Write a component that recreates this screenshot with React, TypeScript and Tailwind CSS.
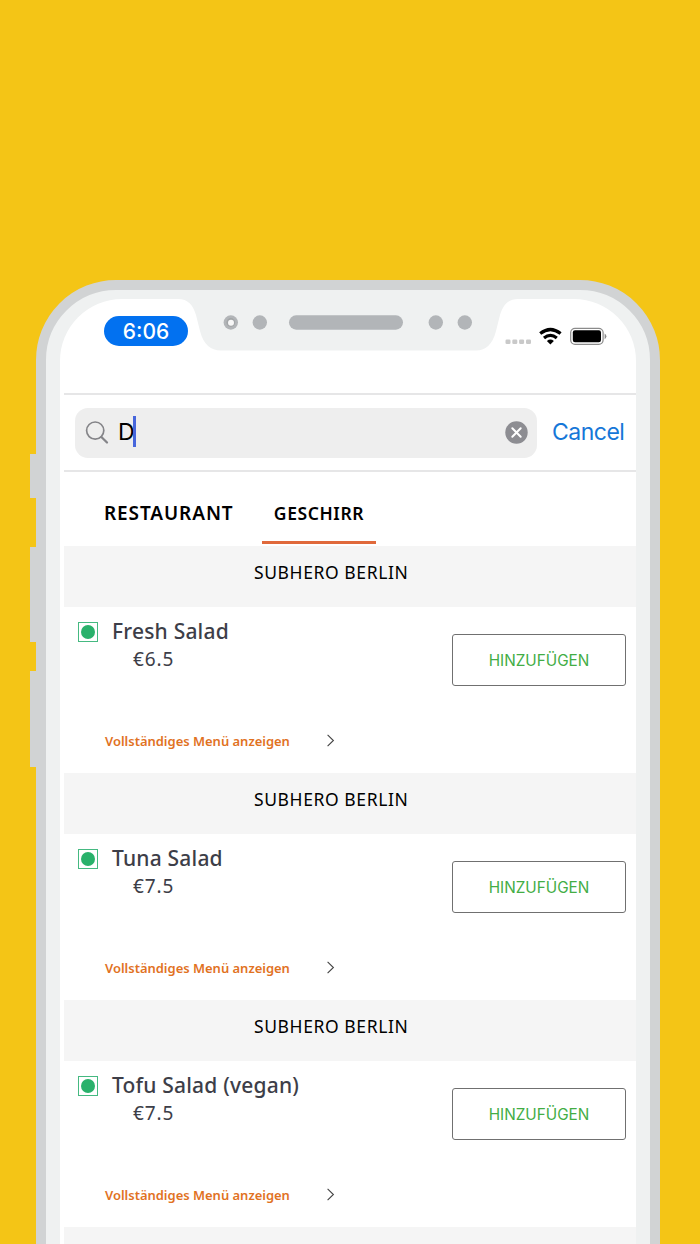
import { useState } from "react";

const dishes = [
    { id: 1, restaurant: "SUBHERO BERLIN", name: "Fresh Salad", price: "€6.5" },
    { id: 2, restaurant: "SUBHERO BERLIN", name: "Tuna Salad", price: "€7.5" },
    { id: 3, restaurant: "SUBHERO BERLIN", name: "Tofu Salad (vegan)", price: "€7.5" },
];

const Notch = () => {
    return (
        <svg className="absolute left-[118px] top-[-1px]" width="340" height="53" viewBox="178 298 340 53">
            <path d="M178 298V299C188 299 193 305 196 315L200 331Q205 350.5 221 350.5H476Q491 350.5 496 331L500 315C503 305 508 299 518 299V298Z" fill="#eff1f1" />
            <circle cx="230.8" cy="322.5" r="7.2" fill="#b2b5b8" />
            <circle cx="230.8" cy="322.5" r="4.4" fill="#a3a6a8" />
            <circle cx="231" cy="322.8" r="3" fill="#f7f7f7" />
            <circle cx="259.8" cy="322.5" r="7.2" fill="#b2b5b8" />
            <rect x="289" y="315.3" width="114" height="14.4" rx="7.2" fill="#b2b5b8" />
            <circle cx="435.8" cy="322.5" r="7.2" fill="#b2b5b8" />
            <circle cx="464.8" cy="322.5" r="7.2" fill="#b2b5b8" />
        </svg>
    );
};

const StatusBar = () => {
    return (
        <div className="flex h-[94px] items-start justify-between pl-11 pr-[29px] pt-[17px]">
            <div className="flex h-[30px] w-[84px] items-center justify-center rounded-full bg-[#0271f0] pt-[2px] text-[21px] font-medium text-white">
                <span>6:06</span>
            </div>
            <svg className="mt-[10px]" width="103" height="22" viewBox="504 326 103 22">
                <g fill="#c9c9c9">
                    <rect x="505.5" y="339.5" width="5" height="4.6" rx="1.3" />
                    <rect x="512.3" y="339.5" width="5" height="4.6" rx="1.3" />
                    <rect x="519.1" y="339.5" width="5" height="4.6" rx="1.3" />
                    <rect x="526" y="339.5" width="5" height="4.6" rx="1.3" />
                </g>
                <g fill="none" stroke="#000" strokeWidth="3.2">
                    <path d="M540.2 333.6Q550.4 325.4 560.6 333.6" />
                    <path d="M544 338Q550.4 332.8 556.8 338" />
                </g>
                <path d="M550.4 344.4L546.9 340.9Q550.4 338.2 553.9 340.9Z" fill="#000" />
                <rect x="570.7" y="328.3" width="32.4" height="16" rx="4.3" fill="none" stroke="#8b8b8b" strokeWidth="1.2" />
                <rect x="572.8" y="330.3" width="28.2" height="12" rx="2.2" fill="#000" />
                <path d="M604.6 333.4Q606.4 334.2 606.4 336.3T604.6 339.2Z" fill="#8b8b8b" />
            </svg>
        </div>
    );
};

const SearchBar = () => {
    const [search, setSearch] = useState("D");
    return (
        <div className="ml-1 flex h-[79px] items-center border-y-2 border-[#e6e6e7] pl-[11px]">
            <div className="flex h-[50px] w-[462px] items-center rounded-[13px] bg-[#eeeeee] pl-[10px] pr-[9px]">
                <svg width="24" height="24" viewBox="0 0 24 24" fill="none" stroke="#858589" strokeLinecap="round">
                    <circle cx="10.2" cy="9.6" r="8.6" strokeWidth="1.7" />
                    <path d="M16.4 16L22 21.5" strokeWidth="2.3" />
                </svg>
                <span className="ml-[9px] text-[23px] text-black">{search}</span>
                <span className="-ml-[2px] h-[31px] w-[3px] -translate-y-px bg-[#4766dc]" />
                <button className="ml-auto" onClick={() => setSearch("")}>
                    <svg width="23" height="23" viewBox="0 0 23 23">
                        <circle cx="11.5" cy="11.5" r="11.2" fill="#8d8d92" />
                        <path d="M7.3 7.3L15.7 15.7M15.7 7.3L7.3 15.7" stroke="#fff" strokeWidth="2" strokeLinecap="round" />
                    </svg>
                </button>
            </div>
            <button className="ml-[15px] text-[23px] tracking-[-0.5px] text-[#1677d8]">Cancel</button>
        </div>
    );
};

const Tabs = () => {
    return (
        <div className="ml-1 flex h-[74px] pl-[40px] pt-[8px] font-['Noto_Sans',sans-serif] font-semibold text-black">
            <button className="h-[66px] w-[130px] whitespace-nowrap text-left text-[19px] tracking-[0.9px]">RESTAURANT</button>
            <button className="ml-[28px] h-[64px] w-[114px] border-b-[3px] border-[#e0693b] pt-[5px] text-[17.5px] tracking-[0.6px]">GESCHIRR</button>
        </div>
    );
};

const Dish = ({ dish }: { dish: (typeof dishes)[number] }) => {
    return (
        <div className="ml-1 font-['Noto_Sans',sans-serif]">
            <div className="h-[61px] bg-[#f5f5f5] pl-[190px] pt-[13px] text-[17.5px] leading-[27px] tracking-[0.6px] text-black">
                <span className="whitespace-nowrap">{dish.restaurant}</span>
            </div>
            <div className="flex h-[166px] justify-between pr-[10px]">
                <div className="pl-[14px] pt-[10px] text-[#3d3e48]">
                    <div className="flex h-[30px]">
                        <div className="mt-[5px] flex h-5 w-5 items-center justify-center border border-[#45b981]">
                            <div className="h-[14px] w-[14px] rounded-full bg-[#29b16b]" />
                        </div>
                        <h3 className="ml-[14px] whitespace-nowrap text-[21px] font-medium leading-[29px] tracking-[0.2px]">{dish.name}</h3>
                    </div>
                    <p className="ml-[55px] text-[19px] leading-[24px] tracking-[0.9px]">{dish.price}</p>
                    <div className="ml-[27px] mt-[59px] flex items-center text-[#e1721f]">
                        <span className="w-[222px] whitespace-nowrap text-[13px] font-semibold leading-[22px] tracking-[-0.02px]">Vollständiges Menü anzeigen</span>
                        <svg className="-translate-y-px" width="9" height="13" viewBox="0 0 9 13" fill="none" stroke="#444" strokeWidth="1.1">
                            <path d="M0.6 0.8L6.4 6.5L0.6 12.2" />
                        </svg>
                    </div>
                </div>
                <button className="mt-[27px] h-[52px] w-[174px] rounded-[3px] border border-[#707070] pt-[2px] font-[Inter,sans-serif] text-[15.3px] text-[#43ad45]">
                    HINZUFÜGEN
                </button>
            </div>
        </div>
    );
};

const App = () => {
    return (
        <div className="h-[1244px] w-[700px] overflow-hidden bg-[#f4c516] pl-[30px] pt-[280px] font-[Inter,sans-serif]">
            <div className="flex">
                <div className="w-[6px] shrink-0 pt-[174px]">
                    <div className="h-[44px] bg-[#d1d3d4]" />
                    <div className="mt-[49px] h-[95px] bg-[#d1d3d4]" />
                    <div className="mt-[29px] h-[96px] bg-[#d1d3d4]" />
                </div>
                <div className="h-[1100px] w-[624px] rounded-t-[80px] border-[10px] border-[#d1d3d4] bg-[#eff1f1] pl-[14px] pr-[14px] pt-[9px]">
                    <div className="relative h-[1080px] overflow-hidden rounded-t-[62px] bg-white">
                        <Notch />
                        <StatusBar />
                        <SearchBar />
                        <Tabs />
                        {dishes.map((dish) => (
                            <Dish key={dish.id} dish={dish} />
                        ))}
                        <div className="ml-1 h-[61px] bg-[#f5f5f5]" />
                    </div>
                </div>
            </div>
        </div>
    );
};

export default App;
